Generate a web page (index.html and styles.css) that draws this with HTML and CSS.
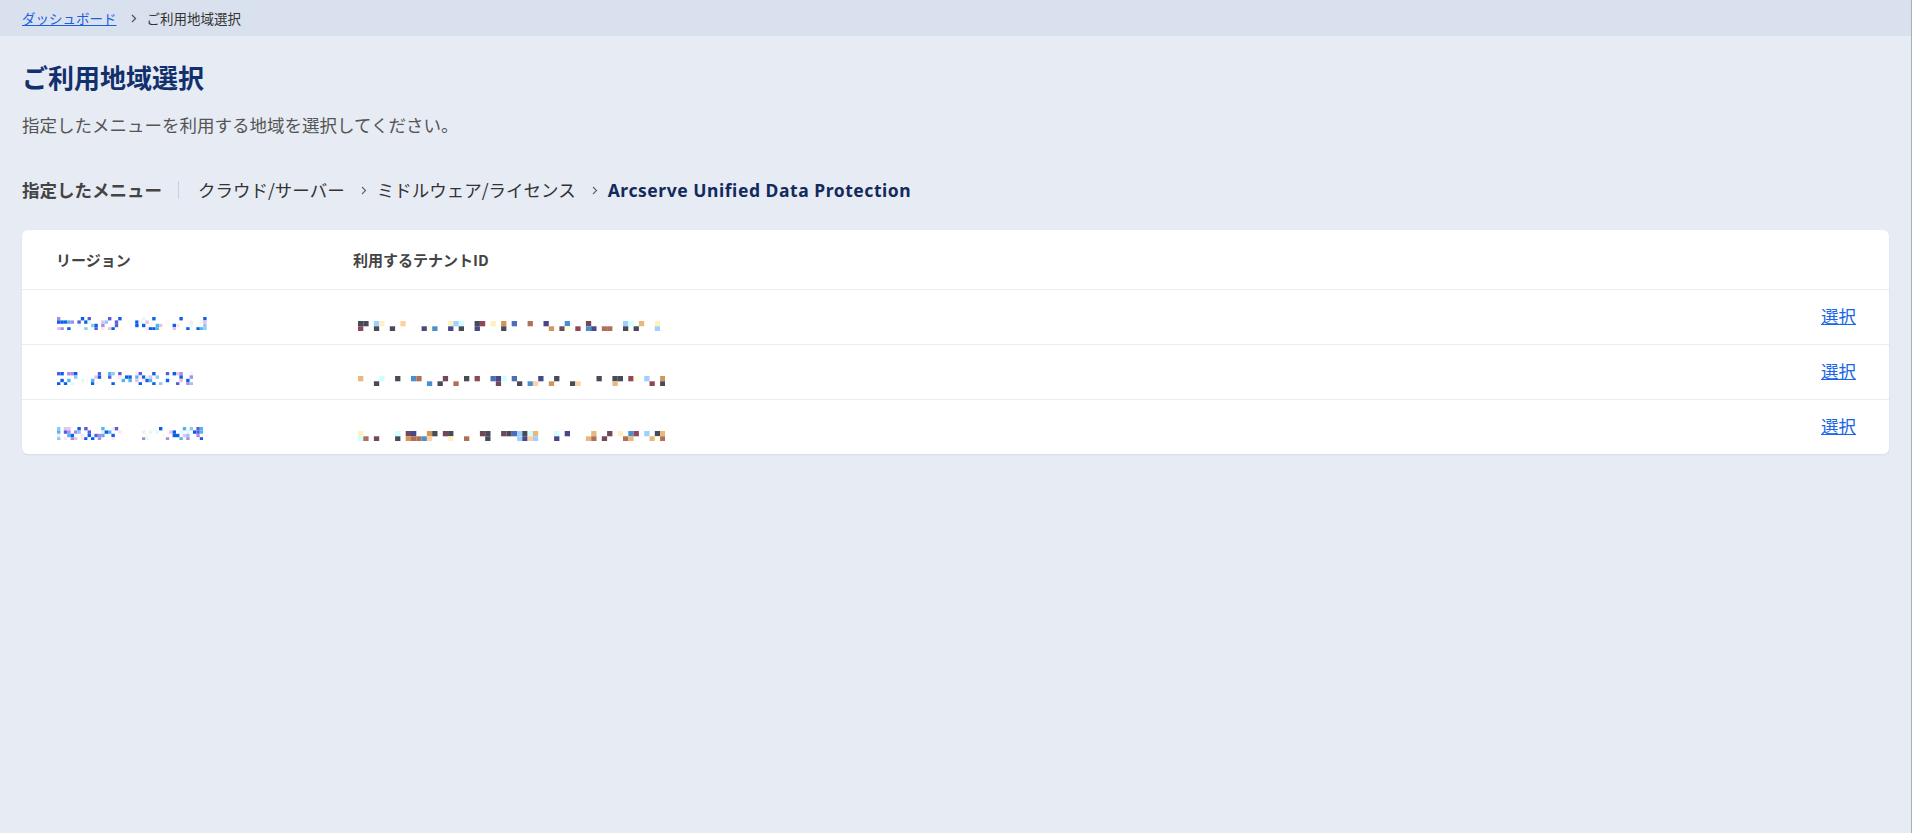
FILE: index.html
```html
<!DOCTYPE html>
<html lang="ja">
<head>
  <meta charset="UTF-8">
  <meta name="viewport" content="width=device-width, initial-scale=1.0">
  <title>ご利用地域選択</title>
  <link rel="stylesheet" href="styles.css">
</head>
<body>

<nav class="crumbs">
  <a href="#">ダッシュボード</a>
  <svg class="crumb-chev" width="6" height="9" viewBox="0 0 6 9"><polyline points="1,1 4.5,4.5 1,8" fill="none" stroke="#555" stroke-width="1.3"/></svg>
  <span class="crumb-current">ご利用地域選択</span>
</nav>

<main class="content">
  <h1 class="page-title">ご利用地域選択</h1>
  <p class="lead">指定したメニューを利用する地域を選択してください。</p>

  <div class="menu-path">
    <span class="menu-label">指定したメニュー</span>
    <span class="menu-bar"></span>
    <span class="menu-item">クラウド/サーバー</span>
    <svg class="menu-chev" width="6" height="9" viewBox="0 0 6 9"><polyline points="1,1 4.5,4.5 1,8" fill="none" stroke="#666" stroke-width="1.2"/></svg>
    <span class="menu-item">ミドルウェア/ライセンス</span>
    <svg class="menu-chev" width="6" height="9" viewBox="0 0 6 9"><polyline points="1,1 4.5,4.5 1,8" fill="none" stroke="#666" stroke-width="1.2"/></svg>
    <span class="menu-current">Arcserve Unified Data Protection</span>
  </div>

  <div class="region-card">
    <table class="region-table">
      <thead>
        <tr>
          <th class="col-region">リージョン</th>
          <th class="col-tenant">利用するテナントID</th>
          <th class="col-action"></th>
        </tr>
      </thead>
      <tbody>
        <tr>
          <td><svg class="mosaic region" data-kind="region" data-cols="44" data-rows="4" data-gap="19,22" data-seed="11"></svg></td>
          <td><svg class="mosaic tenant" data-kind="tenant" data-cols="57" data-rows="2" data-gap="" data-seed="23"></svg></td>
          <td class="col-action"><a href="#" class="select-link">選択</a></td>
        </tr>
        <tr>
          <td><svg class="mosaic region" data-kind="region" data-cols="40" data-rows="4" data-gap="" data-seed="37"></svg></td>
          <td><svg class="mosaic tenant" data-kind="tenant" data-cols="58" data-rows="2" data-gap="" data-seed="41"></svg></td>
          <td class="col-action"><a href="#" class="select-link">選択</a></td>
        </tr>
        <tr>
          <td><svg class="mosaic region" data-kind="region" data-cols="43" data-rows="4" data-gap="19,24" data-seed="53"></svg></td>
          <td><svg class="mosaic tenant" data-kind="tenant" data-cols="58" data-rows="2" data-gap="" data-seed="67"></svg></td>
          <td class="col-action"><a href="#" class="select-link">選択</a></td>
        </tr>
      </tbody>
    </table>
  </div>
</main>

<script src="script.js"></script>
</body>
</html>
```

FILE: styles.css
```css
html, body {
  margin: 0;
  padding: 0;
}

body {
  font-family: "Noto Sans CJK JP", "Noto Sans", sans-serif;
  background-color: #e6ebf4;
  color: #333;
  min-height: 100vh;
  border-right: 1px solid #9fb2bd;
  box-sizing: border-box;
}

/* breadcrumb bar */
.crumbs {
  height: 36px;
  background-color: #dae1ee;
  display: flex;
  align-items: center;
  padding: 0 22px;
  font-size: 13.5px;
  box-sizing: border-box;
}

.crumbs a {
  color: #1a5fe0;
  text-decoration: underline;
}

.crumb-chev {
  margin: 0 10px 0 14px;
}

.crumb-current {
  color: #333;
}

.content {
  padding: 0 22px;
}

.page-title {
  margin: 22px 0 0;
  font-size: 26px;
  line-height: 38px;
  font-weight: bold;
  color: #12306c;
}

.lead {
  margin: 16px 0 0;
  font-size: 17.5px;
  line-height: 26px;
  color: #555;
}

.menu-path {
  margin-top: 39px;
  display: flex;
  align-items: center;
  font-size: 17.5px;
  line-height: 26px;
}

.menu-label {
  font-weight: bold;
  color: #444;
}

.menu-bar {
  width: 1px;
  height: 18px;
  background-color: #c9d0dc;
  margin: 0 19px 0 16px;
}

.menu-item {
  color: #333;
}

.menu-chev {
  margin: 0 10px 0 16px;
}

.menu-current {
  font-family: "Noto Sans", "Noto Sans CJK JP", sans-serif;
  font-weight: bold;
  letter-spacing: 0.55px;
  color: #132a5c;
}

/* region list */
.region-card {
  margin-top: 27px;
  background-color: #fff;
  border-radius: 6px;
  box-shadow: 0 1px 2px rgba(40, 60, 100, 0.08);
  overflow: hidden;
}

.region-table {
  width: 100%;
  border-collapse: collapse;
}

.region-table th {
  height: 59px;
  text-align: left;
  font-size: 15px;
  font-weight: bold;
  color: #444;
  padding: 0;
}

.region-table td {
  height: 54px;
  padding: 0;
  border-top: 1px solid #e8ecf3;
  vertical-align: middle;
}

.region-table th:first-child,
.region-table td:first-child {
  width: 297px;
  padding-left: 34px;
}

.mosaic {
  display: block;
}

.mosaic.region {
  margin-top: 13px;
  margin-left: 1px;
}

.mosaic.tenant {
  margin-top: 18px;
  margin-left: 5px;
}

.col-action {
  text-align: right;
  padding-right: 33px !important;
}

.region-table td.col-action {
  height: 51px;
  padding-bottom: 3px;
}

.select-link {
  color: #1a66e8;
  font-size: 17.5px;
  text-decoration: underline;
}
```

FILE: script.js
```js
var palettes = {
  region: ['#0d5fe8', '#0d5fe8', '#0d5fe8', '#4fb6f0', '#a98ce8', '#e6c2ea', '#fde6f0', '#e0fbff', '#fffbe2', '#5a5ae0', '#8ecaf5'],
  tenant: ['#484a58', '#484a58', '#484a58', '#4a6eb8', '#4a90d0', '#d09858', '#e8b880', '#b07058', '#904858', '#704858',
           '#484888', '#d0ffff', '#a0d0ff', '#fff0c0', '#ffd0a0', '#ffffe0']
};

var sizes = { region: 3.4, tenant: 5.3 };

function makeRandom(seed) {
  return function() {
    seed = (seed * 16807) % 2147483647;
    return (seed - 1) / 2147483646;
  };
}

function drawMosaic(svg) {
  var kind = svg.getAttribute('data-kind');
  var cols = parseInt(svg.getAttribute('data-cols'));
  var rows = parseInt(svg.getAttribute('data-rows'));
  var gap = svg.getAttribute('data-gap').split(',');
  var rnd = makeRandom(parseInt(svg.getAttribute('data-seed')));
  var size = sizes[kind];
  var colors = palettes[kind];
  svg.setAttribute('width', cols * size);
  svg.setAttribute('height', rows * size);
  var html = '';
  for (var c = 0; c < cols; c++) {
    // blank stretch between words
    if (gap.length == 2 && c >= parseInt(gap[0]) && c <= parseInt(gap[1])) continue;
    if (c > 0 && c < cols - 1 && rnd() < 0.15) continue;
    for (var r = 0; r < rows; r++) {
      var fill = (c == 0 || c == cols - 1) ? rnd() < 0.8 : rnd() < 0.45;
      if (fill) {
        var color = colors[Math.floor(rnd() * colors.length)];
        html += '<rect x="' + (c * size) + '" y="' + (r * size) + '" width="' + size + '" height="' + size + '" fill="' + color + '"/>';
      }
    }
  }
  svg.innerHTML = html;
}

var mosaics = document.getElementsByClassName('mosaic');
for (var i = 0; i < mosaics.length; i++) {
  drawMosaic(mosaics[i]);
}
```
